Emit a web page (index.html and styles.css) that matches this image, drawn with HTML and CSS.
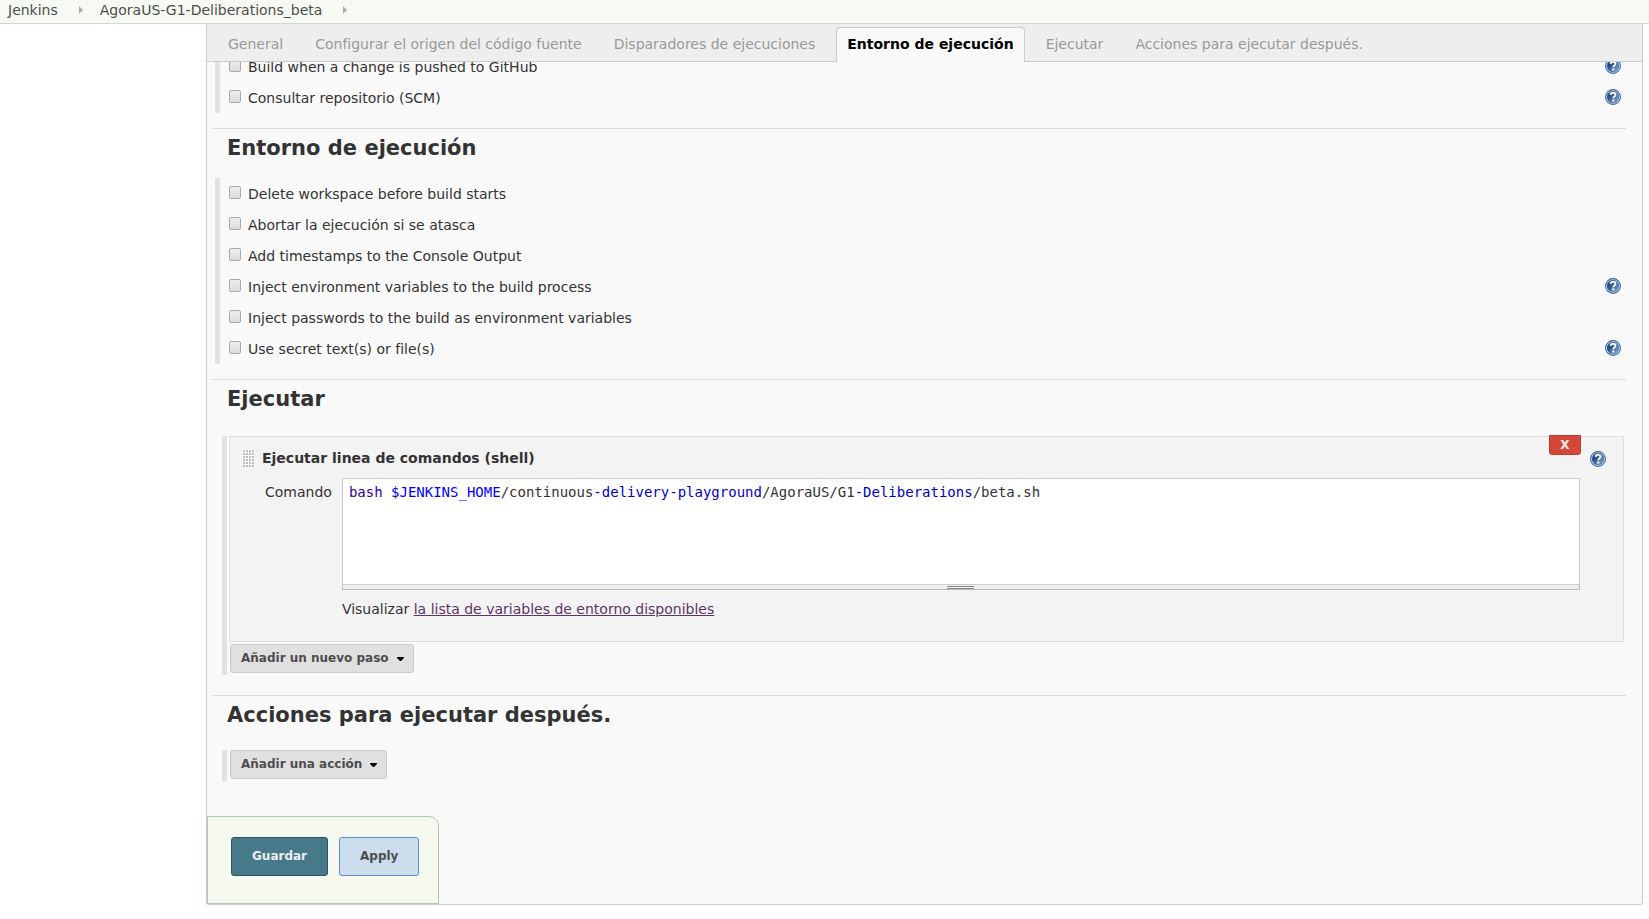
FILE: index.html
```html
<!DOCTYPE html>
<html lang="es">
<head>
<meta charset="utf-8">
<title>AgoraUS-G1-Deliberations_beta Config [Jenkins]</title>
<link rel="stylesheet" href="styles.css">
</head>
<body>
<svg class="defs" width="0" height="0" aria-hidden="true">
  <defs>
    <linearGradient id="help-fill" x1="0" y1="0" x2="1" y2="1">
      <stop offset="0.3" stop-color="#204a87"/>
      <stop offset="1" stop-color="#8fb3dd"/>
    </linearGradient>
    <symbol id="help" viewBox="0 0 16 16">
      <circle cx="8" cy="8" r="7.4" fill="#fff" stroke="#3465a4" stroke-width="1.1"/>
      <circle cx="8" cy="8" r="6" fill="url(#help-fill)" stroke="#2a5591" stroke-width="0.5"/>
      <path d="M5.6 5.9C5.7 4.4 6.7 3.7 8 3.7c1.5 0 2.5.8 2.5 2 0 1.6-2.2 1.8-2.2 3.6" fill="none" stroke="#fff" stroke-width="1.9"/>
      <rect x="7.2" y="10.4" width="2.1" height="2.1" fill="#fff"/>
    </symbol>
  </defs>
</svg>

<nav class="breadcrumbs" aria-label="Ruta">
  <a href="#">Jenkins</a><span class="crumb-arrow"></span>
  <a href="#">AgoraUS-G1-Deliberations_beta</a><span class="crumb-arrow"></span>
</nav>

<main class="panel">
  <nav class="tabs" aria-label="Secciones">
    <a class="tab" href="#general">General</a>
    <a class="tab" href="#scm">Configurar el origen del código fuente</a>
    <a class="tab" href="#triggers">Disparadores de ejecuciones</a>
    <a class="tab active" href="#env">Entorno de ejecución</a>
    <a class="tab" href="#build">Ejecutar</a>
    <a class="tab" href="#post">Acciones para ejecutar después.</a>
  </nav>

  <form class="config">
    <section class="section scrolled" id="triggers">
      <div class="options">
        <div class="option"><input type="checkbox" id="o1"><label for="o1">Build when a change is pushed to GitHub</label><button type="button" class="help" aria-label="Ayuda"><svg><use href="#help"/></svg></button></div>
        <div class="option"><input type="checkbox" id="o2"><label for="o2">Consultar repositorio (SCM)</label><button type="button" class="help" aria-label="Ayuda"><svg><use href="#help"/></svg></button></div>
      </div>
    </section>

    <section class="section" id="env">
      <h2>Entorno de ejecución</h2>
      <div class="options">
        <div class="option"><input type="checkbox" id="o3"><label for="o3">Delete workspace before build starts</label></div>
        <div class="option"><input type="checkbox" id="o4"><label for="o4">Abortar la ejecución si se atasca</label></div>
        <div class="option"><input type="checkbox" id="o5"><label for="o5">Add timestamps to the Console Output</label></div>
        <div class="option"><input type="checkbox" id="o6"><label for="o6">Inject environment variables to the build process</label><button type="button" class="help" aria-label="Ayuda"><svg><use href="#help"/></svg></button></div>
        <div class="option"><input type="checkbox" id="o7"><label for="o7">Inject passwords to the build as environment variables</label></div>
        <div class="option"><input type="checkbox" id="o8"><label for="o8">Use secret text(s) or file(s)</label><button type="button" class="help" aria-label="Ayuda"><svg><use href="#help"/></svg></button></div>
      </div>
    </section>

    <section class="section" id="build">
      <h2>Ejecutar</h2>
      <div class="steps steps-build">
        <div class="step">
          <div class="step-head">
            <span class="grip"></span>
            <h3>Ejecutar linea de comandos (shell)</h3>
            <button type="button" class="help" aria-label="Ayuda"><svg><use href="#help"/></svg></button>
            <button type="button" class="remove">X</button>
          </div>
          <div class="field">
            <label for="command">Comando</label>
            <div class="field-body">
              <div class="editor">
                <pre class="code"><span class="builtin">bash</span> <span class="var">$JENKINS_HOME</span>/continuous<span class="attr">-delivery-playground</span>/AgoraUS/G1<span class="attr">-Deliberations</span>/beta.sh</pre>
                <textarea id="command" class="code" spellcheck="false"></textarea>
              </div>
              <div class="resizer"><span></span></div>
              <p>Visualizar <a href="#">la lista de variables de entorno disponibles</a></p>
            </div>
          </div>
        </div>
        <button type="button" class="add">Añadir un nuevo paso<svg viewBox="0 0 7 4"><path d="M0 0h7v1L4 4H3L0 1z"/></svg></button>
      </div>
    </section>

    <section class="section" id="post">
      <h2>Acciones para ejecutar después.</h2>
      <div class="steps">
        <button type="button" class="add">Añadir una acción<svg viewBox="0 0 7 4"><path d="M0 0h7v1L4 4H3L0 1z"/></svg></button>
      </div>
    </section>

    <div class="actions">
      <button type="submit" class="btn primary">Guardar</button>
      <button type="button" class="btn">Apply</button>
    </div>
  </form>
</main>
</body>
</html>
```
FILE: styles.css
```css
* { box-sizing: border-box; }

body {
  margin: 0;
  background: #fff;
  color: #333;
  font: 14px/20px "DejaVu Sans", Verdana, sans-serif;
}

.defs { position: absolute; }

button {
  font: inherit;
  cursor: pointer;
}

.breadcrumbs {
  display: flex;
  align-items: center;
  gap: 17px;
  height: 24px;
  padding: 0 8px 3px;
  background: #f6faf2;
  border-bottom: 1px solid #d3d7cf;
}

.breadcrumbs a {
  color: #4d4d4d;
  text-decoration: none;
}

.crumb-arrow {
  width: 4px;
  margin-left: 4px;
  border: solid transparent;
  border-width: 4px 0 4px 4px;
  border-left-color: #aaa;
}

.panel {
  margin: 0 6px 14px 206px;
  border: 1px solid #ccc;
  border-top: 0;
  border-radius: 0 0 3px 3px;
  background: #f9f9f9;
}

.tabs {
  display: flex;
  align-items: flex-end;
  gap: 10px;
  height: 38px;
  padding: 0 10px;
  background: #eee;
  border-bottom: 1px solid #ccc;
}

.tab {
  height: 34px;
  padding: 6px 10px 0;
  border: 1px solid transparent;
  border-bottom: 0;
  border-radius: 4px 4px 0 0;
  color: #999;
  text-decoration: none;
}

.tab.active {
  height: 35px;
  margin-bottom: -1px;
  border-color: #ccc;
  background: #f9f9f9;
  color: #000;
  font-weight: bold;
}

.config { overflow: hidden; }

.section {
  margin: 0 16px 0 5px;
  border-top: 1px solid #ddd;
}

.section.scrolled {
  margin-top: -11px;
  border-top: 0;
}

h2 {
  margin: 0;
  padding: 5px 0 16px 15px;
  font-size: 21px;
  line-height: 28px;
}

.options {
  margin: 0 0 15px 3px;
  padding-left: 9px;
  border-left: 5px solid #e2e2e2;
}

.option {
  display: flex;
  align-items: flex-start;
  height: 31px;
  padding: 6px 5px 0 0;
}

.option label { flex: 1; }

.option input {
  appearance: none;
  width: 12px;
  height: 13px;
  margin: 2px 7px 0 0;
  border: 1px solid #aaa;
  border-radius: 2px;
  background: linear-gradient(#eee, #dcdcdc);
}

.help {
  width: 16px;
  height: 16px;
  margin-top: 1px;
  padding: 0;
  border: 0;
  background: none;
}

.help svg {
  display: block;
  width: 16px;
  height: 16px;
}

.steps {
  margin: 5px 0 35px 10px;
  padding: 0 2px 2px 2px;
  border-left: 5px solid #e2e2e2;
}

.steps-build {
  margin-top: 7px;
  margin-bottom: 20px;
}

.step {
  position: relative;
  margin-bottom: 2px;
  padding: 10px 17px 22px 12px;
  border: 1px solid #ddd;
  background: #f3f3f3;
}

.step-head {
  display: flex;
  align-items: center;
  height: 22px;
}

.step-head .help { margin-top: 2px; }

.grip {
  width: 12px;
  height: 18px;
  margin-right: 8px;
  background:
    linear-gradient(#fff 1px, transparent 1px) 0 0 / 3px 3px,
    linear-gradient(90deg, #fff 1px, #bbb 1px) 0 0 / 3px 3px;
}

h3 {
  flex: 1;
  margin: 0;
  font-size: 14px;
  line-height: 20px;
}

.remove {
  position: absolute;
  top: -2px;
  right: 42px;
  width: 32px;
  height: 20px;
  padding: 0;
  border: 1px solid #bf3c2c;
  border-radius: 0 0 3px 3px;
  background: #d4483a;
  color: #f3eded;
  font-size: 12px;
  font-weight: bold;
  line-height: 18px;
}

.field {
  display: flex;
  gap: 10px;
  margin: 9px 26px 0 23px;
}

.field label { padding-top: 4px; }

.field-body { flex: 1; }

.editor {
  display: grid;
  height: 107px;
  border: 1px solid #ccc;
  background: #fff;
}

.code {
  grid-area: 1 / 1;
  width: 100%;
  margin: 0;
  padding: 3px 6px;
  font: 14px/20px "DejaVu Sans Mono", monospace;
}

textarea.code {
  border: 0;
  outline: 0;
  background: none;
  resize: none;
}

.builtin { color: #30a; }
.var { color: #00f; }
.attr { color: #00c; }

.resizer {
  display: flex;
  justify-content: center;
  height: 5px;
  padding-top: 1px;
  border: 1px solid #bbb;
  border-top: 0;
  background: #eee;
}

.resizer span {
  width: 27px;
  height: 3px;
  border: solid #888;
  border-width: 1px 0;
}

p { margin: 9px 0 0; }

p a { color: #5c3566; }

.add {
  display: flex;
  align-items: center;
  gap: 8px;
  height: 29px;
  margin-left: 1px;
  padding: 0 9px 2px 10px;
  border: 1px solid #ccc;
  border-radius: 3px;
  background: #e0e0e0;
  color: #4d4d4d;
  font-size: 12px;
  font-weight: bold;
}

.add svg {
  width: 7px;
  height: 4px;
  margin-top: 3px;
}

.actions {
  display: flex;
  gap: 11px;
  width: max-content;
  padding: 20px 19px 27px 23px;
  border: 1px solid #abcbb9;
  border-radius: 0 10px 0 0;
  background: #f5f9f0;
}

.btn {
  height: 39px;
  padding: 0 20px 2px;
  border: 1px solid #5c8fd0;
  border-radius: 3px;
  background: #ccdded;
  color: #4d4d4d;
  font-size: 12px;
  font-weight: bold;
}

.btn.primary {
  border-color: #2f5565;
  background: #467989;
  color: #eee;
}
```
